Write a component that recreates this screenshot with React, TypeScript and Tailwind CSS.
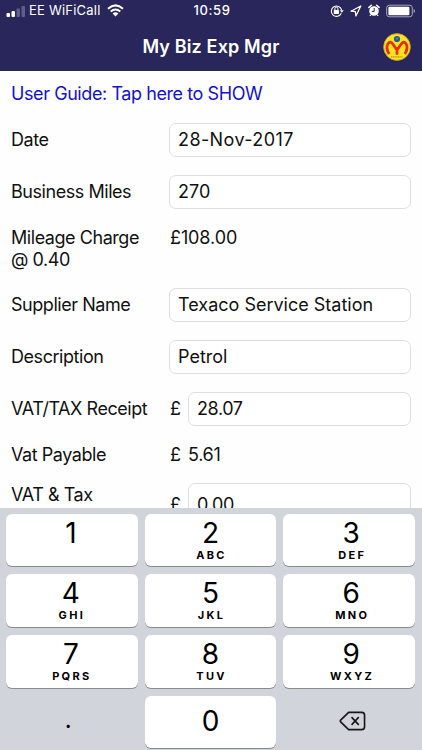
import React from "react";

function Field({ children, className = "" }: { children: React.ReactNode; className?: string }) {
  return (
    <div className={`flex h-[34px] flex-1 items-center rounded-[7px] border border-[#dedede] bg-white pl-2 ${className}`}>
      <span className="whitespace-nowrap">{children}</span>
    </div>
  );
}

function Row({ label, children, className }: {
  label: React.ReactNode;
  children: React.ReactNode;
  className: string;
}) {
  return (
    <div className={`flex shrink-0 ${className}`}>
      <div className="w-[158px] shrink-0 whitespace-nowrap tracking-[-0.45px]">{label}</div>
      {children}
    </div>
  );
}

function Key({ digit, letters, className = "" }: { digit: string; letters?: string; className?: string }) {
  return (
    <div className={`flex flex-col items-center rounded-[6px] bg-white shadow-[0_1px_0_#898a8d] ${className}`}>
      <span className={`text-[28px] leading-[32px] ${letters === undefined ? "mt-[9px]" : "mt-[3px]"}`}>{digit}</span>
      {letters && <span className="pl-[2px] text-[11px] font-bold leading-[12px] tracking-[2.3px]">{letters}</span>}
    </div>
  );
}

function StatusBar() {
  return (
    <div className="grid h-[21px] grid-cols-[1fr_auto_1fr] items-center px-[6px] text-[13px]">
      <div className="flex items-center">
        <svg width="20" height="14" viewBox="0 0 20 14">
          <rect x="0.5" y="9" width="3.5" height="4" rx="1" fill="white" />
          <rect x="5.5" y="7" width="3.5" height="6" rx="1" fill="white" />
          <rect x="10.5" y="4.5" width="3.5" height="8.5" rx="1" fill="#625c88" />
          <rect x="15.5" y="2" width="3.5" height="11" rx="1" fill="#625c88" />
        </svg>
        <span className="ml-[3px] whitespace-nowrap tracking-[0.22px]">EE WiFiCall</span>
        <svg className="ml-[6px]" width="17" height="13" viewBox="0 0 17 13" fill="none" stroke="white" strokeWidth="2">
          <path d="M1 4.7Q8.5-2 16 4.7M3.7 7.6Q8.5 3.4 13.3 7.6" />
          <path d="M5.6 9.4Q8.5 7 11.4 9.4L8.5 12.4Z" fill="white" stroke="none" />
        </svg>
      </div>
      <span className="pl-[2px] font-medium tracking-[0.6px]">10:59</span>
      <div className="flex items-center justify-end">
        <svg width="14" height="14" viewBox="0 0 14 14" fill="none" stroke="white">
          <path d="M11.3 9.3A5.2 5.2 0 1 1 11.6 6" strokeWidth="1.1" />
          <path d="M9.8 6.2h4l-2 2.6z" fill="white" stroke="none" />
          <rect x="3.8" y="6" width="5.2" height="4" rx=".4" fill="white" stroke="none" />
          <path d="M4.9 6V4.7a1.5 1.5 0 0 1 3 0V6" />
        </svg>
        <svg className="ml-[6px]" width="12" height="12" viewBox="0 0 12 12" fill="none" stroke="white" strokeWidth="1.25">
          <path d="M10.8 1L1 6.2l4.4.5.5 4.3z" strokeLinejoin="round" />
        </svg>
        <svg className="ml-[6px]" width="12" height="13" viewBox="0 0 12 13">
          <circle cx="6" cy="7" r="4.8" fill="white" />
          <path d="M.9 3.4L3.4 1.3M8.6 1.3l2.5 2.1" stroke="white" strokeWidth="1.5" strokeLinecap="round" fill="none" />
          <path d="M2.7 10.8l-.8 1.1M9.3 10.8l.8 1.1" stroke="white" strokeWidth="1.2" />
          <path d="M6.2 4v3.4H3.8" stroke="#28265b" strokeWidth="1" fill="none" />
        </svg>
        <svg className="ml-[6px] mr-0" width="30" height="14" viewBox="0 0 30 14">
          <rect x=".7" y="1.2" width="25.6" height="11.6" rx="2.6" fill="none" stroke="#aaa8bd" strokeWidth="1" />
          <rect x="2.4" y="2.7" width="21" height="8.6" rx="1" fill="white" />
          <path d="M27.6 5v4q1.4-.6 1.4-2t-1.4-2" fill="#aaa8bd" />
        </svg>
      </div>
    </div>
  );
}

function Logo() {
  return (
    <svg width="28" height="28" viewBox="0 0 28 28">
      <circle cx="14" cy="14" r="13.4" fill="#f9e51b" stroke="#b79443" strokeWidth="0.8" />
      <path d="M6.2 21Q2.4 15 5 10.6Q7.4 7.4 10 11.2L14 17L18 11.2Q20.6 7.4 23 10.6Q25.6 15 21.8 21M14 15.5V21.8" fill="none" stroke="#e52d18" strokeWidth="2.7" />
      <circle cx="14" cy="6" r="3.1" fill="#285a91" />
      <path d="M12.5 4.7h3L14 7z" fill="#5d91bd" />
      <path d="M8 23.8h12" stroke="#bd8b27" strokeWidth="1.3" strokeDasharray="1.2 .5" />
    </svg>
  );
}

export default function App() {
  return (
    <div className="flex h-[750px] w-[422px] flex-col overflow-hidden bg-[#fefefe] font-['Inter',sans-serif] text-black">
      <header className="h-[71px] shrink-0 bg-[#28265b] text-white">
        <StatusBar />
        <div className="grid h-[50px] grid-cols-[1fr_auto_1fr] items-center px-[11px]">
          <h1 className="col-start-2 whitespace-nowrap text-[18px] font-semibold tracking-[0.15px]">My Biz Exp Mgr</h1>
          <div className="flex justify-end pt-px"><Logo /></div>
        </div>
      </header>

      <main className="flex h-[437px] shrink-0 flex-col overflow-hidden px-[11px] text-[18px] leading-[22px] text-[#111]">
        <a className="flex h-[43px] shrink-0 items-center pt-[2px] text-[18px] tracking-[-0.42px] text-[#1512cb]">
          User Guide: Tap here to SHOW
        </a>
        <Row label="Date" className="h-[52px] items-center"><Field><span className="tracking-[0.4px]">28-Nov-2017</span></Field></Row>
        <Row label="Business Miles" className="h-[51px] items-center"><Field>270</Field></Row>
        <Row label={<>Mileage Charge<br />@ 0.40</>} className="h-[62px] pt-[10px]"><span className="pl-px tracking-[-0.1px]">£108.00</span></Row>
        <Row label="Supplier Name" className="h-[52px] items-center"><Field>Texaco Service Station</Field></Row>
        <Row label="Description" className="h-[52px] items-center"><Field>Petrol</Field></Row>
        <Row label="VAT/TAX Receipt" className="h-[51px] items-center"><span className="w-[19px] pl-px">£</span><Field><span className="tracking-[-0.4px]">28.07</span></Field></Row>
        <Row label="Vat Payable" className="h-[41px] items-center"><span className="w-[19px] pl-px">£</span><span className="tracking-[-0.3px]">5.61</span></Row>
        <Row label="VAT & Tax" className="h-[51px] pt-[9px]"><span className="w-[19px] pl-px pt-[10px]">£</span><Field className="-mt-px min-h-[43px]"><span className="tracking-[-0.3px]">0.00</span></Field></Row>
      </main>

      <section className="grid h-[242px] shrink-0 grid-cols-3 grid-rows-[52px_53px_53px_52px] gap-x-[7px] gap-y-[8px] bg-[#d1d4da] pl-[6px] pr-[7px] pt-[6px]">
        <Key digit="1" letters="" className="pr-[2px]" />
        <Key digit="2" letters="ABC" />
        <Key digit="3" letters="DEF" className="pl-[4px]" />
        <Key digit="4" letters="GHI" className="pr-[2px]" />
        <Key digit="5" letters="JKL" />
        <Key digit="6" letters="MNO" className="pl-[4px]" />
        <Key digit="7" letters="PQRS" className="pr-[2px]" />
        <Key digit="8" letters="TUV" />
        <Key digit="9" letters="WXYZ" className="pl-[4px]" />
        <div className="flex items-center justify-center pb-[5px] pr-[7px] text-[24px]">.</div>
        <Key digit="0" />
        <div className="flex items-center justify-center pb-[2px] pl-[6px]">
          <svg width="27" height="20" viewBox="0 0 28 20" fill="none" stroke="#161719" strokeWidth="1.7" strokeLinejoin="round">
            <path d="M10 1h13.5Q26.5 1 26.5 4v12q0 3-3 3H10L1.7 11Q1 10 1.7 9z" />
            <path d="M13 6l7.5 8M20.5 6L13 14" />
          </svg>
        </div>
      </section>
    </div>
  );
}
